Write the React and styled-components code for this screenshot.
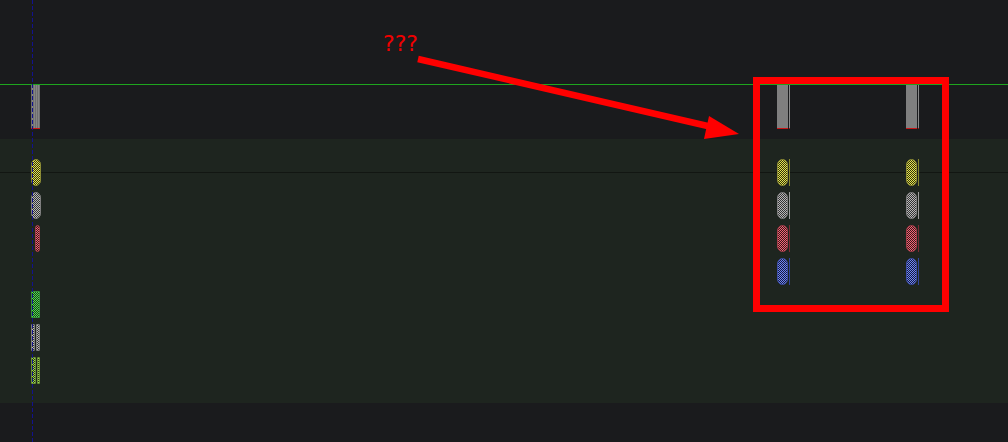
import React from "react";
import styled, { createGlobalStyle } from "styled-components";

const Global = createGlobalStyle`
  html, body { margin: 0; padding: 0; background: #1a1b1d; }
  body { font-family: "DejaVu Sans", sans-serif; }
`;

const Viewport = styled.div`
  position: relative;
  width: 1008px;
  height: 442px;
  overflow: hidden;
  background: #1a1b1d;
  display: flex;
  flex-direction: column;
`;

const TopSpace = styled.div`
  height: 84px;
  flex: none;
`;

const GreenRule = styled.div`
  height: 1px;
  flex: none;
  background: #1ea61e;
`;

const HeaderLane = styled.div`
  position: relative;
  height: 54px;
  flex: none;
`;

const TrackArea = styled.div`
  position: relative;
  height: 264px;
  flex: none;
  background: #1e251f;
`;

const TrackDivider = styled.div`
  margin-top: 33px;
  height: 1px;
  background: #121612;
`;

const BottomSpace = styled.div`
  flex: 1;
`;

const Clip = styled.div`
  position: absolute;
  top: 0;
  left: ${(p) => p.$x}px;
  display: flex;
  gap: 1px;
  align-items: flex-start;
`;

const ClipBody = styled.div`
  width: ${(p) => p.$w}px;
  height: 43px;
  background: ${(p) =>
    p.$striped
      ? "repeating-linear-gradient(90deg, #6e6e6e 0 1px, #858585 1px 2px)"
      : "#7f7f7f"};
  border-bottom: 1px solid #c81414;
`;

const ClipTick = styled.div`
  width: 1px;
  height: 44px;
  background: #8a8a8a;
  border-bottom: 1px solid #a01818;
  box-sizing: border-box;
`;

const Stack = styled.div`
  position: absolute;
  top: 20px;
  left: ${(p) => p.$x}px;
  display: flex;
  flex-direction: column;
  gap: 6px;
`;

const Slot = styled.div`
  height: 27px;
  display: flex;
  align-items: flex-start;
  gap: 1px;
  padding-left: ${(p) => p.$pad || 0}px;
`;

const palettes = {
  yellow: { a: "#e6e650", b: "#30300e", edge: "#8c8c34", tick: "#86862e" },
  gray: { a: "#b8b8b8", b: "#343434", edge: "#7e7e7e", tick: "#9a9a9a" },
  red: { a: "#f26474", b: "#38181c", edge: "#a03c48", tick: "#7a2a34" },
  blue: { a: "#6c84f4", b: "#181c3c", edge: "#3c4ca4", tick: "#34449a" },
  green: { a: "#4ee44e", b: "#183618", edge: "#34903a", tick: "#2a7a2a" },
  lime: { a: "#9cd44c", b: "#263614", edge: "#6a9034", tick: "#5a7a2a" },
};

const PillSvg = styled.svg`
  display: block;
  flex: none;
`;

function Pill({ c, w = 11, flat = false }) {
  const pal = palettes[c];
  const id = `chk-${c}`;
  const r = flat ? 0.5 : Math.min(5.5, w / 2);
  return (
    <PillSvg width={w} height={27} viewBox={`0 0 ${w} 27`}>
      <defs>
        <pattern id={id} width="2" height="2" patternUnits="userSpaceOnUse">
          <rect width="2" height="2" fill={pal.b} />
          <rect width="1" height="1" fill={pal.a} shapeRendering="crispEdges" />
          <rect x="1" y="1" width="1" height="1" fill={pal.a} shapeRendering="crispEdges" />
        </pattern>
      </defs>
      <rect
        x="0.5"
        y="0.5"
        width={w - 1}
        height="26"
        rx={r}
        fill={`url(#${id})`}
        stroke={pal.edge}
        strokeWidth="1"
      />
    </PillSvg>
  );
}

const PillTick = styled.div`
  width: 1px;
  height: 27px;
  background: ${(p) => palettes[p.$c].tick};
`;

const Playhead = styled.div`
  position: absolute;
  top: 0;
  bottom: 0;
  left: 32px;
  width: 1px;
  background: repeating-linear-gradient(180deg, #12128e 0 4px, transparent 4px 6px);
`;

const Callout = styled.div`
  position: absolute;
  left: 753px;
  top: 77px;
  width: 196px;
  height: 235px;
  box-sizing: border-box;
  border: 7px solid #ff0000;
`;

const Note = styled.div`
  position: absolute;
  left: 383px;
  top: 33px;
  font-family: "DejaVu Sans", sans-serif;
  font-size: 22px;
  line-height: 1;
  color: #f00000;
`;

const ArrowSvg = styled.svg`
  position: absolute;
  left: 0;
  top: 0;
  pointer-events: none;
`;

const rightColumns = [777, 906];
const lanes = ["yellow", "gray", "red", "blue"];

export default function App() {
  return (
    <>
      <Global />
      <Viewport>
        <TopSpace />
        <GreenRule />
        <HeaderLane>
          <Clip $x={31}>
            <ClipBody $w={9} $striped />
          </Clip>
          {rightColumns.map((x) => (
            <Clip key={x} $x={x}>
              <ClipBody $w={11} />
              <ClipTick />
            </Clip>
          ))}
        </HeaderLane>
        <TrackArea>
          <TrackDivider />
          <Stack $x={31}>
            <Slot><Pill c="yellow" w={10} /></Slot>
            <Slot><Pill c="gray" w={10} /></Slot>
            <Slot $pad={4}><Pill c="red" w={5} /></Slot>
            <Slot />
            <Slot><Pill c="green" w={9} flat /></Slot>
            <Slot>
              <Pill c="gray" w={4} flat />
              <Pill c="gray" w={4} flat />
            </Slot>
            <Slot>
              <Pill c="lime" w={5} flat />
              <Pill c="lime" w={3} flat />
            </Slot>
          </Stack>
          {rightColumns.map((x) => (
            <Stack key={x} $x={x}>
              {lanes.map((c) => (
                <Slot key={c}>
                  <Pill c={c} />
                  <PillTick $c={c} />
                </Slot>
              ))}
            </Stack>
          ))}
        </TrackArea>
        <BottomSpace />
        <Playhead />
        <Callout />
        <Note>???</Note>
        <ArrowSvg width="1008" height="442" viewBox="0 0 1008 442">
          <line x1="418" y1="59" x2="712" y2="127" stroke="#ff0000" strokeWidth="6.5" />
          <polygon points="739,134 709,116 704,139" fill="#ff0000" />
        </ArrowSvg>
      </Viewport>
    </>
  );
}
